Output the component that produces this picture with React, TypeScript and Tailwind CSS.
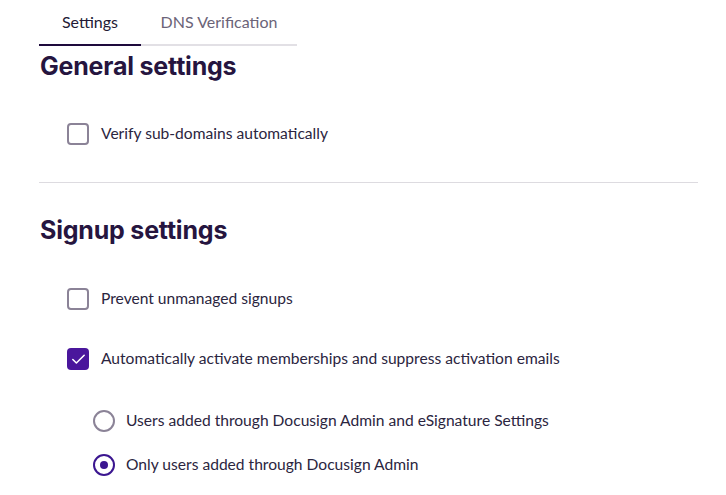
import { Check } from "lucide-react";

const font = { fontFamily: "Lato, 'Open Sans', sans-serif" };
const headFont = { fontFamily: "Inter, Lato, sans-serif" };

function Checkbox({ checked, label }: { checked?: boolean; label: string }) {
  return (
    <label className="flex items-center gap-[12px] pl-[28px] h-[22px]">
      {checked ? (
        <span className="w-[22px] h-[22px] rounded-[4px] bg-[#4a169c] flex items-center justify-center">
          <Check className="w-[17px] h-[17px] text-white" strokeWidth={2.2} />
        </span>
      ) : (
        <span className="w-[22px] h-[22px] rounded-[4px] border-2 border-[#8b8397] bg-white" />
      )}
      <span className="text-[15.6px] text-[#2b2540]">{label}</span>
    </label>
  );
}

function Radio({ checked, label }: { checked?: boolean; label: string }) {
  return (
    <label className="flex items-center gap-[11px] pl-[54px] h-[22px]">
      {checked ? (
        <span className="w-[22px] h-[22px] rounded-full border-2 border-[#3b1690] flex items-center justify-center">
          <span className="w-[8px] h-[8px] rounded-full bg-[#3b1690]" />
        </span>
      ) : (
        <span className="w-[22px] h-[22px] rounded-full border-2 border-[#8b8397]" />
      )}
      <span className="text-[15.6px] text-[#2b2540]">{label}</span>
    </label>
  );
}

export default function App() {
  return (
    <div className="w-[726px] h-[495px] bg-white px-[39px] overflow-hidden" style={font}>
      <div className="flex w-[258px] border-b-2 border-[#e2e0e5]">
        <div className="w-[102px] pt-[11px] pb-[11px] text-center text-[16px] leading-[22px] text-[#231a35] border-b-[2px] border-[#1e0a3c] -mb-[2px]">
          Settings
        </div>
        <div className="flex-1 pt-[11px] pb-[11px] text-center text-[16px] leading-[22px] text-[#6b6478]">
          DNS Verification
        </div>
      </div>

      <h2 className="mt-[5px] pl-px text-[25px] font-bold leading-[30px] tracking-[-0.2px] text-[#26153f]" style={headFont}>
        General settings
      </h2>

      <div className="mt-[42px]">
        <Checkbox label="Verify sub-domains automatically" />
      </div>

      <div className="mt-[37px] border-t border-[#dddbe0] w-[659px]" />

      <h2 className="mt-[32px] pl-px text-[25px] font-bold leading-[30px] tracking-[-0.2px] text-[#26153f]" style={headFont}>
        Signup settings
      </h2>

      <div className="mt-[43px] flex flex-col gap-[38px]">
        <Checkbox label="Prevent unmanaged signups" />
        <Checkbox checked label="Automatically activate memberships and suppress activation emails" />
      </div>

      <div className="mt-[40px] flex flex-col gap-[22px]">
        <Radio label="Users added through Docusign Admin and eSignature Settings" />
        <Radio checked label="Only users added through Docusign Admin" />
      </div>
    </div>
  );
}
